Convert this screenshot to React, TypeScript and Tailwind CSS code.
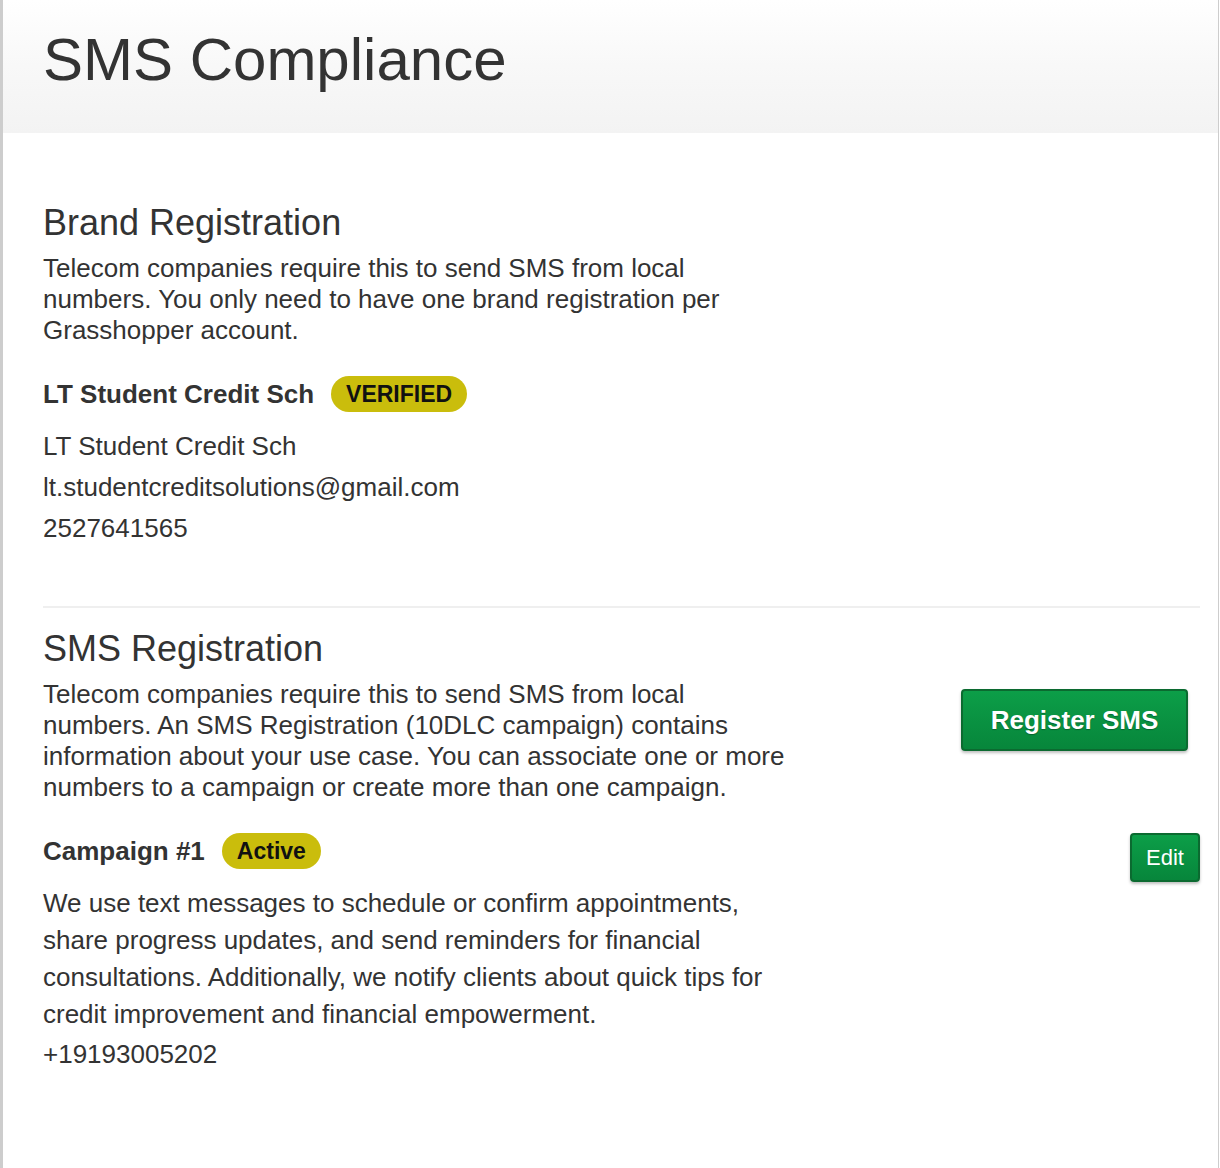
import React from 'react';

const brandInfo = ['LT Student Credit Sch', 'lt.studentcreditsolutions@gmail.com', '2527641565'];

function Badge({ label }: { label: string }) {
  return (
    <span className="inline-flex h-[36px] items-center rounded-full bg-[#cabd0c] px-[15px] text-[23px] font-bold leading-none text-[#111]">
      {label}
    </span>
  );
}

export default function App() {
  return (
    <div className="min-h-screen bg-white font-['Liberation_Sans',Arial,sans-serif] text-[#333]">
      <div className="mr-[1px] min-h-[1168px] border-l-[3px] border-r border-[#cdcdcd]">
        <header className="h-[133px] bg-gradient-to-b from-white via-[#f8f8f8] to-[#f3f3f3] px-[40px] pt-[26px]">
          <h1 className="text-[60px] leading-[67px]">SMS Compliance</h1>
        </header>

        <main className="pl-[40px] pr-[18px]">
          <section className="pt-[70px]">
            <h2 className="text-[36px] leading-[40px]">Brand Registration</h2>
            <p className="mt-[10px] w-[748px] text-[26px] leading-[31px]">
              Telecom companies require this to send SMS from local numbers. You only need to have one brand registration per Grasshopper account.
            </p>
            <div className="mt-[30px] flex h-[36px] items-center gap-[17px]">
              <span className="text-[26px] font-bold">LT Student Credit Sch</span>
              <Badge label="VERIFIED" />
            </div>
            <div className="mt-[14px] text-[26px] leading-[41px]">
              {brandInfo.map(line => <div key={line}>{line}</div>)}
            </div>
          </section>

          <div className="mt-[57px] h-[2px] bg-[#efefef]" />

          <section className="pt-[21px]">
            <h2 className="text-[36px] leading-[40px]">SMS Registration</h2>
            <div className="mt-[10px] flex items-start justify-between">
              <p className="w-[748px] text-[26px] leading-[31px]">
                Telecom companies require this to send SMS from local numbers. An SMS Registration (10DLC campaign) contains information about your use case. You can associate one or more numbers to a campaign or create more than one campaign.
              </p>
              <button className="mr-[12px] mt-[10px] h-[62px] w-[227px] rounded-[4px] border-2 border-[#0b6a30] bg-gradient-to-b from-[#0c9e48] to-[#07863b] text-[26px] font-bold text-white shadow-[0_2px_3px_rgba(0,0,0,0.25)] [text-shadow:0_1px_1px_rgba(0,0,0,0.3)]">
                Register SMS
              </button>
            </div>

            <div className="mt-[30px] flex items-start justify-between">
              <div className="flex h-[36px] items-center gap-[17px]">
                <span className="text-[26px] font-bold">Campaign #1</span>
                <Badge label="Active" />
              </div>
              <button className="h-[49px] w-[70px] rounded-[4px] border-2 border-[#0b6a30] bg-gradient-to-b from-[#0c9e48] to-[#07863b] text-[22px] text-white shadow-[0_2px_3px_rgba(0,0,0,0.25)]">
                Edit
              </button>
            </div>
            <p className="mt-[3px] w-[748px] text-[26px] leading-[37px]">
              We use text messages to schedule or confirm appointments, share progress updates, and send reminders for financial consultations. Additionally, we notify clients about quick tips for credit improvement and financial empowerment.
            </p>
            <div className="mt-[1px] text-[26px] leading-[41px]">+19193005202</div>
          </section>
        </main>
      </div>
    </div>
  );
}
